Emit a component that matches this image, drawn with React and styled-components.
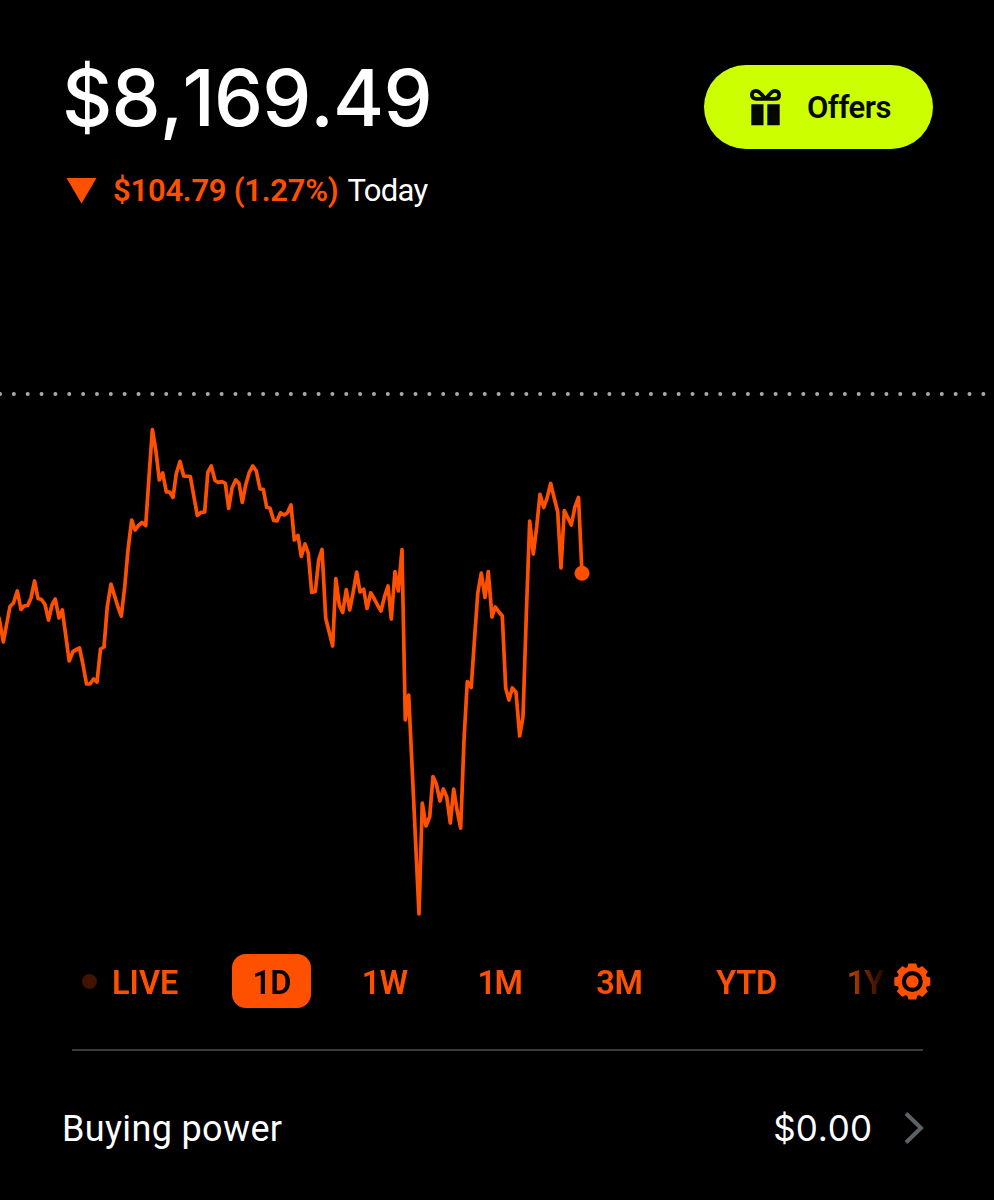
import React from "react";
import styled, { createGlobalStyle } from "styled-components";

const ORANGE = "#ff5000";
const LIME = "#ccff00";

const GlobalStyle = createGlobalStyle`
  *, *::before, *::after { box-sizing: border-box; }
  body {
    margin: 0;
    background: #000;
    color: #fff;
    font-family: Roboto, "Liberation Sans", sans-serif;
  }
`;

const Screen = styled.main`
  display: flex;
  flex-direction: column;
  width: 994px;
  height: 1200px;
  overflow: hidden;
  background: #000;
`;

const Header = styled.header`
  display: flex;
  justify-content: space-between;
  align-items: flex-start;
  height: 380px;
  padding: 65px 61px 0 62px;
`;

const Price = styled.h1`
  margin: 0;
  height: 84px;
  line-height: 66px;
  font-family: Inter, "Liberation Sans", sans-serif;
  font-size: 78px;
  font-weight: 450;
  font-kerning: none;
  letter-spacing: -0.9px;
  white-space: nowrap;
`;

const Change = styled.div`
  display: flex;
  align-items: center;
  height: 36px;
  margin-top: 24px;
  padding-left: 4px;
  font-size: 31px;
  line-height: 36px;
  white-space: nowrap;
`;

const DownArrow = styled.svg`
  width: 31px;
  height: 26px;
  margin-right: 16px;
`;

const ChangeAmount = styled.span`
  color: ${ORANGE};
  font-weight: 650;
  letter-spacing: -0.25px;
`;

const ChangePeriod = styled.span`
  margin-left: 9px;
  font-weight: 370;
  letter-spacing: -0.7px;
`;

const OffersButton = styled.button`
  display: flex;
  align-items: center;
  width: 229px;
  height: 84px;
  padding: 0 0 0 46px;
  border: 0;
  border-radius: 42px;
  background: ${LIME};
  color: #050800;
  font: 650 31px/36px Roboto, "Liberation Sans", sans-serif;
  letter-spacing: -0.5px;
`;

const OffersLabel = styled.span`
  padding-top: 2px;
`;

const GiftIcon = styled.svg`
  width: 31px;
  height: 38px;
  margin-right: 26px;
`;

const Chart = styled.svg`
  display: block;
  width: 994px;
  height: 550px;
  flex: none;
`;

const RangeBar = styled.div`
  display: flex;
  align-items: center;
  height: 54px;
  margin-top: 24px;
  padding-left: 81px;
  flex: none;
`;

const RangeTabs = styled.nav`
  display: flex;
  gap: 32px;
  width: 809px;
  overflow: hidden;
  flex: none;
  mask-image: linear-gradient(to right, #000 755px, transparent 809px);
`;

const RangeTab = styled.button`
  display: flex;
  align-items: center;
  justify-content: ${(p) => (p.$start ? "flex-start" : "center")};
  flex: none;
  width: ${(p) => p.$width}px;
  height: 54px;
  padding: 0;
  border: 0;
  border-radius: 14px;
  background: ${(p) => (p.$active ? ORANGE : "transparent")};
  color: ${(p) => (p.$active ? "#000" : ORANGE)};
  font: 650 32.5px/54px Roboto, "Liberation Sans", sans-serif;
  letter-spacing: ${(p) => p.$spacing || 0}px;
`;

const RangeLabel = styled.span`
  padding-top: 3px;
`;

const LiveDot = styled.span`
  width: 15px;
  height: 15px;
  margin: 0 15px 0 1px;
  border-radius: 50%;
  background: #401400;
`;

const SettingsIcon = styled.svg`
  width: 38px;
  height: 38px;
  margin-left: 3px;
`;

const Divider = styled.hr`
  width: 851px;
  height: 2px;
  margin: 41px 0 0 72px;
  border: 0;
  background: #3a3a3d;
  flex: none;
`;

const BalanceRow = styled.section`
  display: flex;
  align-items: center;
  height: 60px;
  margin-top: 48px;
  padding: 0 70px 0 62px;
  font-size: 36px;
  line-height: 60px;
  flex: none;
`;

const BalanceLabel = styled.span`
  flex: 1;
  font-weight: 380;
  letter-spacing: 0.35px;
`;

const BalanceValue = styled.span`
  font-family: Inter, "Liberation Sans", sans-serif;
  font-size: 35px;
  font-weight: 370;
  font-kerning: none;
  line-height: 58px;
  padding-bottom: 2px;
`;

const Chevron = styled.svg`
  width: 20px;
  height: 34px;
  margin-left: 32px;
`;

const SERIES = [
  [-1, 618], [0, 623], [3.3, 642], [10, 606.5], [13.5, 603], [17.3, 591], [21, 609.5], [24, 606],
  [27.7, 605.5], [31, 598], [34.6, 581], [38, 598.5], [41.5, 599.5], [45, 604.5], [48.5, 620],
  [52, 605], [55.3, 599], [59, 618], [62.3, 610], [69.2, 661], [73, 651.5], [79.5, 648],
  [82.7, 663], [86.5, 684], [90, 684], [93.5, 679], [97, 682], [100.5, 649], [104, 647],
  [107.3, 606.5], [111, 584], [114.3, 595], [118, 607], [121.3, 616], [124.7, 587], [128, 550],
  [131.7, 520], [135, 530], [138.5, 525.5], [142, 522.5], [145.7, 525.5], [149, 477],
  [152.4, 429.5], [156, 451.5], [159.3, 480], [162.7, 473], [166.3, 492], [169.7, 492],
  [173, 497.5], [176.3, 473.5], [180, 461.5], [183.7, 476], [190.3, 476.5], [197.3, 515.5],
  [201, 512.3], [204.7, 512], [207.8, 472.5], [211.3, 466], [215, 480.5], [218.3, 482.3],
  [222, 481.7], [225.3, 483.3], [228.7, 508.5], [232, 488], [235.7, 480], [239, 483.3],
  [242.3, 502.5], [245.7, 485], [249.3, 472.3], [252.8, 466], [256.3, 471], [260, 489],
  [263.3, 489.3], [266.7, 507.3], [270, 508.3], [273.7, 520.5], [277, 521], [280.5, 512.8],
  [284, 515], [287.5, 512.7], [291, 505], [294.3, 540], [298, 535.5], [301.3, 556.5],
  [305, 544], [308.3, 553.3], [311.7, 592.5], [315.3, 591.5], [318.7, 560], [322, 549.5],
  [325.7, 618.3], [332.7, 646], [335.8, 578.5], [339.3, 605], [342.7, 612.5], [346.3, 589.5],
  [349.7, 610], [353.3, 591.7], [356.7, 572], [360, 592], [363.7, 589.3], [367, 608.5],
  [370.7, 592.8], [374, 598.3], [377.3, 604.7], [381, 611], [384.5, 596.7], [388, 586],
  [391.3, 619], [395, 571.5], [398.3, 591], [402, 549.5], [405.3, 720], [408.7, 695],
  [419, 914], [422.3, 803], [426, 826], [429.7, 816.7], [433, 776.5], [436.3, 784],
  [440, 801], [443.3, 789], [446.7, 796.7], [450.3, 823], [453.7, 789], [457.3, 811.7],
  [460.7, 828], [464, 740], [467.3, 681.5], [471.2, 687.5], [474.7, 636.7], [477.8, 593],
  [481.3, 573], [485, 597.5], [488.3, 571.5], [492, 617], [495.3, 607], [498.7, 611.7],
  [502.3, 616], [505.7, 688.3], [509, 700], [512.3, 688], [516, 692.3], [519.7, 736],
  [523, 716.7], [526.7, 603.3], [529.7, 521], [533.3, 554], [536.7, 526.7], [540, 494.3],
  [543.7, 507.5], [547, 498.3], [550.7, 483.5], [554, 497.3], [557.7, 511.7], [561, 568],
  [564.3, 510.5], [571.3, 525], [575, 506.7], [578.5, 497.5], [582, 573.3],
];

const BASELINE_DOTS = Array.from({ length: 72 }, (_, i) => i * 13.85);
const TEETH = [0, 45, 90, 135, 180, 225, 270, 315];

const RANGES = [
  { label: "LIVE", width: 119, live: true },
  { label: "1D", width: 79, active: true, spacing: -0.8 },
  { label: "1W", width: 83, spacing: -0.8 },
  { label: "1M", width: 83, spacing: -1.6 },
  { label: "3M", width: 93, spacing: -0.3 },
  { label: "YTD", width: 97, spacing: -0.3 },
  { label: "1Y", width: 76, spacing: -1 },
];

export default function App() {
  return (
    <>
      <GlobalStyle />
      <Screen>
        <Header>
          <div>
            <Price>$8,169.49</Price>
            <Change>
              <DownArrow viewBox="0 0 31 26">
                <path d="M0.5 0H30.5L15.5 25.5Z" fill={ORANGE} />
              </DownArrow>
              <ChangeAmount>$104.79 (1.27%)</ChangeAmount>
              <ChangePeriod>Today</ChangePeriod>
            </Change>
          </div>
          <OffersButton>
            <GiftIcon viewBox="0 0 31 38" fill="none">
              <path
                d="M15.5 10.9H6.2C3.4 10.9 1.9 9.2 1.9 6.9C1.9 4.5 3.5 2.8 6 2.8C10.2 2.8 11.8 7.6 15.5 10.9ZM15.5 10.9H24.8C27.6 10.9 29.1 9.2 29.1 6.9C29.1 4.5 27.5 2.8 25 2.8C20.8 2.8 19.2 7.6 15.5 10.9Z"
                stroke="#050800"
                strokeWidth="3.8"
                strokeLinejoin="round"
              />
              <path d="M1.3 16.3H13.5V37.2H1.3ZM17.3 16.3H29.7V37.2H17.3Z" fill="#050800" />
            </GiftIcon>
            <OffersLabel>Offers</OffersLabel>
          </OffersButton>
        </Header>

        <Chart viewBox="0 380 994 550">
          {BASELINE_DOTS.map((x) => (
            <circle key={x} cx={x} cy="394" r="2" fill="#a9aaa9" />
          ))}
          <polyline
            points={SERIES.map((p) => p.join(",")).join(" ")}
            fill="none"
            stroke={ORANGE}
            strokeWidth="3.7"
            strokeLinejoin="round"
            strokeLinecap="round"
          />
          <circle cx="582" cy="573.3" r="7.5" fill={ORANGE} />
        </Chart>

        <RangeBar>
          <RangeTabs>
            {RANGES.map((r) => (
              <RangeTab
                key={r.label}
                $width={r.width}
                $active={r.active}
                $start={r.live}
                $spacing={r.spacing}
              >
                {r.live && <LiveDot />}
                <RangeLabel>{r.label}</RangeLabel>
              </RangeTab>
            ))}
          </RangeTabs>
          <SettingsIcon viewBox="-19.3 -19.5 38 38">
            {TEETH.map((angle) => (
              <path
                key={angle}
                d="M-5.4 -12L-4 -18H4L5.4 -12Z"
                fill={ORANGE}
                transform={`rotate(${angle})`}
              />
            ))}
            <circle r="12.8" fill="none" stroke={ORANGE} strokeWidth="4.6" />
            <circle r="6.3" fill={ORANGE} />
          </SettingsIcon>
        </RangeBar>

        <Divider />

        <BalanceRow>
          <BalanceLabel>Buying power</BalanceLabel>
          <BalanceValue>$0.00</BalanceValue>
          <Chevron viewBox="0 0 20 34">
            <path d="M2 1.5L17 16L2 30.5" fill="none" stroke="#5b6266" strokeWidth="4" />
          </Chevron>
        </BalanceRow>
      </Screen>
    </>
  );
}
